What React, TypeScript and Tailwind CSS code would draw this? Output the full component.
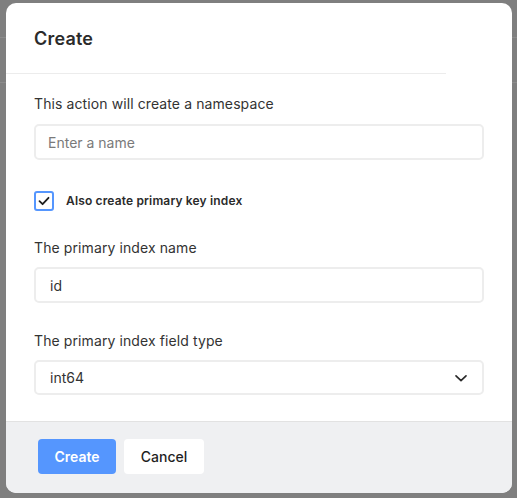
import React, { useState } from 'react';

const App: React.FC = () => {
  const [checked, setChecked] = useState(true);

  return (
    <div className="relative w-[517px] h-[498px] overflow-hidden bg-[#7f7f7f]" style={{ fontFamily: 'Inter, "Noto Sans", sans-serif' }}>
      {/* page behind the overlay */}
      <div className="absolute left-0 top-[37px] w-full h-px bg-[#8c8c8c]" />
      <div className="absolute left-0 top-[82px] w-full h-px bg-[#8c8c8c]" />

      <div className="absolute left-[6px] top-[3px] w-[506px] h-[490px] bg-white rounded-[10px] flex flex-col overflow-hidden">
        <div className="h-[71px] w-[440px] border-b border-[#ececec] flex items-center pl-[28px]">
          <h2 className="text-[18px] font-semibold text-[#2b2b2b] tracking-[0.2px]">Create</h2>
        </div>

        <div className="flex-1 px-[28px] pt-[20px]">
          <p className="text-[14px] text-[#333] leading-[20px] tracking-[0.1px]">This action will create a namespace</p>
          <input
            className="mt-[10px] w-full h-[36px] rounded-[5px] border-2 border-[#ededed] px-[12px] text-[14px] text-[#333] placeholder:text-[#7a7a7a] outline-none"
            placeholder="Enter a name"
          />

          <label className="mt-[31px] flex items-center gap-[12px] cursor-pointer">
            <span
              onClick={() => setChecked(!checked)}
              className="w-[20px] h-[20px] rounded-[3px] border-2 border-[#5596fe] flex items-center justify-center bg-white"
            >
              {checked && (
                <svg width="14" height="14" viewBox="0 0 14 14" fill="none">
                  <path d="M2.5 7.2 5.6 10.2 11.5 3.8" stroke="#1f1f1f" strokeWidth="1.8" strokeLinecap="round" strokeLinejoin="round" />
                </svg>
              )}
            </span>
            <span className="text-[12px] font-semibold text-[#2b2b2b] tracking-[0.15px]">Also create primary key index</span>
          </label>

          <p className="mt-[27px] text-[14px] text-[#333] leading-[20px] tracking-[0.1px]">The primary index name</p>
          <input
            className="mt-[9px] w-full h-[36px] rounded-[5px] border-2 border-[#ededed] px-[14px] text-[14px] text-[#333] outline-none"
            defaultValue="id"
          />

          <p className="mt-[28px] text-[14px] text-[#333] leading-[20px] tracking-[0.1px]">The primary index field type</p>
          <div className="mt-[9px] w-full h-[35px] rounded-[5px] border-2 border-[#ededed] pl-[14px] pr-[14px] flex items-center justify-between text-[14px] text-[#333]">
            <span>int64</span>
            <svg width="14" height="14" viewBox="0 0 14 14" fill="none">
              <path d="M2 4.8 7 9.6 12 4.8" stroke="#2b2b2b" strokeWidth="1.7" strokeLinecap="round" strokeLinejoin="round" />
            </svg>
          </div>
        </div>

        <div className="h-[72px] bg-[#eff0f2] border-t border-[#e2e2e2] flex items-center gap-[8px] pl-[32px] pb-[3px]">
          <button className="w-[78px] h-[35px] rounded-[4px] bg-[#5596fe] text-white text-[14px] font-semibold">Create</button>
          <button className="w-[80px] h-[35px] rounded-[4px] bg-white text-[#1f1f1f] text-[14px] font-medium">Cancel</button>
        </div>
      </div>
    </div>
  );
};

export default App;
